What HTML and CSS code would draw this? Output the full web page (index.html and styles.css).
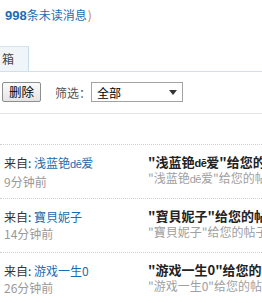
FILE: index.html
```html
<!DOCTYPE html>
<html>
<head>
<meta charset="utf-8">
<link rel="stylesheet" href="styles.css">
</head>
<body>
<div class="page">
  <div class="header"><b class="count">998</b>条未读消息<span class="paren">)</span></div>
  <div class="tabs"><div class="tab">箱</div></div>
  <div class="toolbar">
    <div class="btn">删除</div>
    <span class="label">筛选：</span>
    <div class="select"><span>全部</span><i class="arrow"></i></div>
  </div>
  <div class="list">
    <div class="row">
      <div class="from">
        <div class="who">来自: <a class="name">浅蓝铯<span class="latin">dē</span>爱</a></div>
        <div class="time">9分钟前</div>
      </div>
      <div class="msg">
        <div class="title">"浅蓝铯<span class="latin">dē</span>爱"给您的帖子回复了</div>
        <div class="sub">"浅蓝铯<span class="latin">dē</span>爱"给您的帖子回复了</div>
      </div>
    </div>
    <div class="row">
      <div class="from">
        <div class="who">来自: <a class="name">寶貝妮子</a></div>
        <div class="time">14分钟前</div>
      </div>
      <div class="msg">
        <div class="title">"寶貝妮子"给您的帖子回复了</div>
        <div class="sub">"寶貝妮子"给您的帖子回复了</div>
      </div>
    </div>
    <div class="row">
      <div class="from">
        <div class="who">来自: <a class="name">游戏一生0</a></div>
        <div class="time">26分钟前</div>
      </div>
      <div class="msg">
        <div class="title">"游戏一生0"给您的帖子回复了</div>
        <div class="sub">"游戏一生0"给您的帖子回复了</div>
      </div>
    </div>
  </div>
</div>
</body>
</html>
```

FILE: styles.css
```css
html, body {
  margin: 0;
  padding: 0;
  background: #fff;
}
body {
  width: 262px;
  height: 303px;
  overflow: hidden;
  font-family: "Noto Sans CJK SC", "Liberation Sans", sans-serif;
  font-size: 12px;
  color: #333;
}
.page {
  width: 262px;
}
.header {
  padding: 6px 0 0 5px;
  line-height: 18px;
  height: 18px;
  color: #1d6cb0;
  white-space: nowrap;
}
.count {
  font-family: "Liberation Sans", sans-serif;
  font-size: 13px;
  font-weight: bold;
}
.paren {
  color: #b8804e;
  margin-left: 1px;
}
.tabs {
  margin-top: 22px;
  display: flex;
  border-bottom: 1px solid #d3e0ea;
}
.tab {
  height: 24px;
  line-height: 24px;
  padding: 0 14px 0 2px;
  background: #f0f5fa;
  border-top: 1px solid #d3e3ef;
  border-right: 1px solid #c6dbea;
  color: #444;
  font-size: 12px;
}
.toolbar {
  margin-top: 10px;
  height: 20px;
  display: flex;
  align-items: center;
  padding-left: 2px;
  padding-bottom: 11px;
  border-bottom: 1px solid #e5e5e5;
}
.btn {
  box-sizing: border-box;
  width: 39px;
  height: 20px;
  line-height: 18px;
  text-align: center;
  border: 1px solid #8e8e8e;
  border-radius: 2px;
  background: linear-gradient(#fbfbfb, #e4e4e4);
  color: #000;
  font-size: 12.5px;
}
.label {
  margin-left: 14px;
  color: #555;
}
.select {
  box-sizing: border-box;
  margin-left: 0;
  width: 92px;
  height: 20px;
  border: 1px solid #a3a3a3;
  display: flex;
  align-items: center;
  padding: 0 0 0 5px;
  color: #000;
  position: relative;
}
.arrow {
  position: absolute;
  right: 5px;
  top: 7px;
  width: 0;
  height: 0;
  border-left: 4px solid transparent;
  border-right: 4px solid transparent;
  border-top: 5px solid #333;
}
.list {
  margin-top: 30px;
}
.row {
  display: flex;
  height: 54px;
  box-sizing: border-box;
  border-top: 1px dotted #cfcfcf;
  white-space: nowrap;
}
.from {
  width: 148px;
  padding: 9px 0 0 4px;
  line-height: 17px;
  flex: none;
  box-sizing: border-box;
}
.who {
  color: #333;
}
.name {
  color: #1d6cb0;
  text-decoration: none;
}
.latin {
  font-family: "Liberation Sans", sans-serif;
  font-size: 11px;
  letter-spacing: -0.5px;
}
.time {
  color: #999;
}
.msg {
  padding-top: 8px;
  flex: none;
}
.title {
  font-weight: bold;
  font-size: 13px;
  line-height: 17px;
  height: 17px;
  color: #222;
}
.sub {
  line-height: 16px;
  color: #a0a0a0;
}
```
